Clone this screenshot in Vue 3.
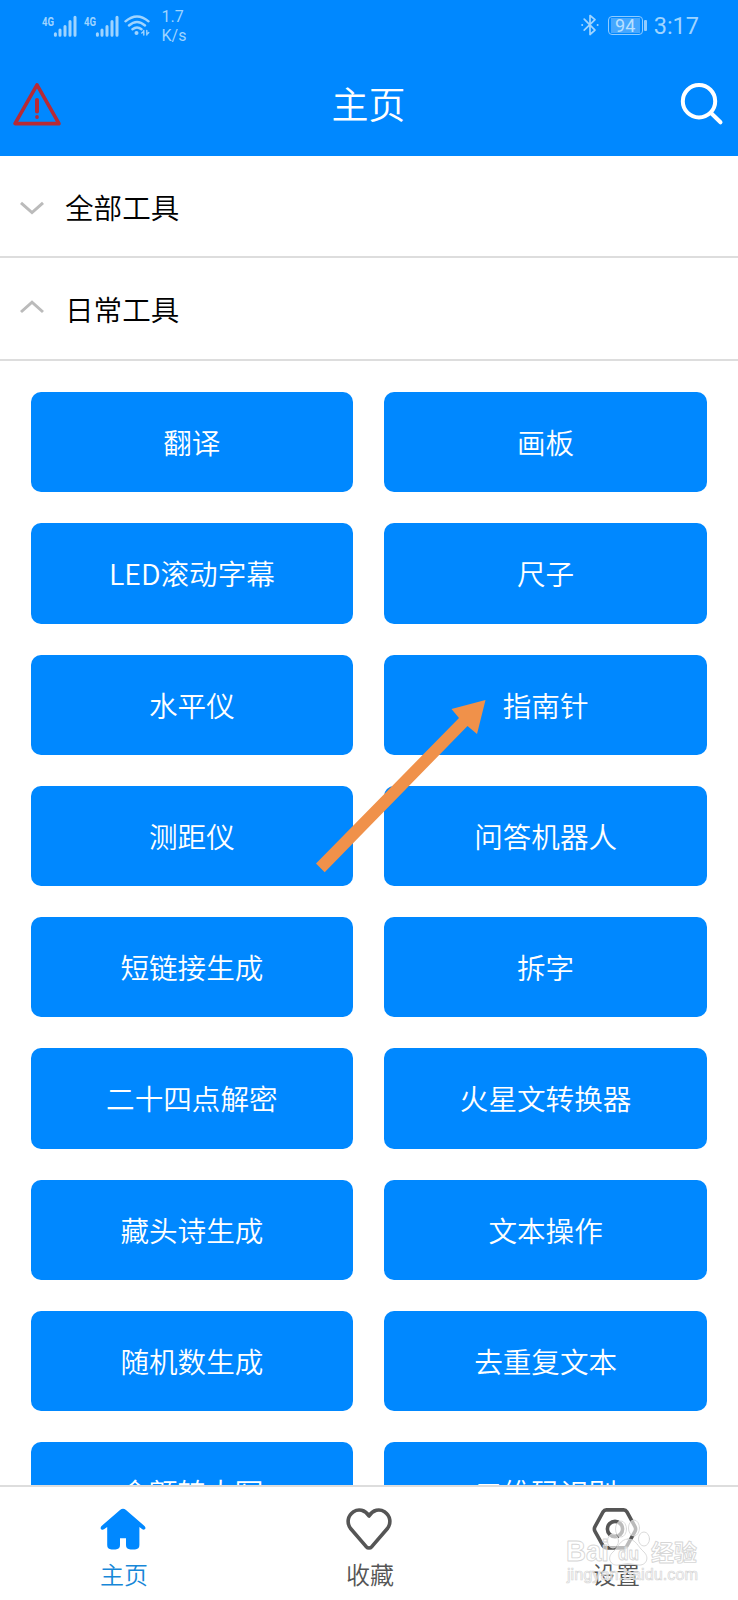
<template>
  <div class="page">
    <header class="header">
      <div class="status-bar">
        <div class="status-left">
          <svg v-for="n in 2" :key="n" class="signal" viewBox="0 0 36 24">
            <text x="0" y="11" class="signal-text" textLength="12" lengthAdjust="spacingAndGlyphs">4G</text>
            <path d="M13.4 20.2V18.8M18 20.2V15M23 20.2V11.5M28 20.2V6.5M33 20.2V2.2" />
          </svg>
          <svg class="wifi" viewBox="0 0 26 24">
            <path d="M1.5 8.3Q13 -1.5 24.5 8.3M5 12.5Q13 5.5 21 12.5M8.5 16.3Q13 12.6 17.5 16.3" />
            <circle cx="12.5" cy="20" r="2" />
            <path class="wifi-data" d="M19.8 17.5V22M22.8 17.5V22M17.8 20L19.8 18.2M24.8 19.6L22.8 21.4" />
          </svg>
          <div class="speed">
            <span>1.7</span>
            <span>K/s</span>
          </div>
        </div>
        <div class="status-right">
          <svg class="bluetooth" viewBox="0 0 18 24">
            <path d="M3.2 6.2L14 17.2L9 21.5V2.5L14 6.6L3.2 17.2" />
            <circle cx="1.2" cy="12" r="1" />
            <circle cx="16.6" cy="12" r="1" />
          </svg>
          <div class="battery"><span>94</span></div>
          <span class="clock">3:17</span>
        </div>
      </div>
      <div class="title-bar">
        <svg class="warning" viewBox="0 0 50 44">
          <path d="M25 2.8L47 41.6H3Z" />
          <path class="mark" d="M25 18V29.5" />
          <circle cx="25" cy="35" r="1.9" />
        </svg>
        <h1>主页</h1>
        <svg class="search" viewBox="0 0 44 44">
          <circle cx="19" cy="19.2" r="16.2" />
          <path d="M31 31L40.5 40.3" />
        </svg>
      </div>
    </header>

    <div class="group closed">
      <svg class="chevron" viewBox="0 0 24 14"><path d="M1 1.8L12 11.6L23 1.8" /></svg>
      <span>全部工具</span>
    </div>
    <div class="group opened">
      <svg class="chevron" viewBox="0 0 24 14"><path d="M1 12L12 2.2L23 12" /></svg>
      <span>日常工具</span>
    </div>

    <main class="content">
      <div class="tools">
        <button v-for="tool in tools" :key="tool" class="tool">{{ tool }}</button>
      </div>
    </main>

    <nav class="tab-bar">
      <a class="tab active">
        <svg viewBox="0 0 46 42">
          <path class="home" d="M20 2Q23 -0.6 26 2L44.7 18.2Q46.2 20 44.8 21.2Q43.6 22.2 42 21L39.4 19V37Q39.4 41.4 35 41.4H30.5Q26 41.4 26 37V30.3H20V37Q20 41.4 15.5 41.4H11.5Q7.2 41.4 7.2 37V19L4 21.3Q2.4 22.2 1.2 21.2Q0 20 1.3 18.2Z" />
        </svg>
        <span>主页</span>
      </a>
      <a class="tab">
        <svg viewBox="0 0 46 42">
          <path d="M23 8C19 1.7 12.4 0.6 7.5 3.8C1.3 8 0.6 15.3 4.8 20.8L20 38.4Q23 41.6 26 38.4L41.2 20.8C45.4 15.3 44.7 8 38.5 3.8C33.6 0.6 27 1.7 23 8Z" />
        </svg>
        <span>收藏</span>
      </a>
      <a class="tab">
        <svg viewBox="0 0 46 42">
          <path d="M14.3 1.9H31.7Q33.7 1.9 34.8 3.7L43 18.6Q44.3 21 43 23.4L34.8 38.1Q33.7 39.9 31.7 39.9H14.3Q12.3 39.9 11.2 38.1L3 23.4Q1.7 21 3 18.6L11.2 3.7Q12.3 1.9 14.3 1.9Z" />
          <circle cx="23" cy="21" r="7.6" />
        </svg>
        <span>设置</span>
      </a>
    </nav>

    <svg class="arrow" viewBox="0 0 170 174">
      <path d="M169.5 0L161 34L151.5 26L8.7 172.3L0 163.5L143 18L135.5 9Z" />
    </svg>

    <svg class="watermark" viewBox="0 0 136 66">
      <g class="paw">
        <ellipse cx="46" cy="24" rx="5.5" ry="7" />
        <ellipse cx="54" cy="12" rx="5.5" ry="8" />
        <ellipse cx="67" cy="11" rx="5.5" ry="8" />
        <ellipse cx="77" cy="22" rx="5.5" ry="7" />
        <path d="M61 22C53 22 51 31 46 35C39 41 44 49 51 48Q61 45 71 48C79 49 83 41 77 35C71 30 69 22 61 22Z" />
      </g>
      <text x="-1" y="44" class="brand" textLength="43" lengthAdjust="spacingAndGlyphs">Bai</text>
      <text x="51" y="43" class="brand-du" textLength="21" lengthAdjust="spacingAndGlyphs">du</text>
      <text x="84" y="44" class="brand-cn" textLength="46" lengthAdjust="spacingAndGlyphs">经验</text>
      <text x="0" y="63" class="brand-url" textLength="131" lengthAdjust="spacingAndGlyphs">jingyan.baidu.com</text>
    </svg>
  </div>
</template>

<script setup>
const tools = [
  '翻译', '画板',
  'LED滚动字幕', '尺子',
  '水平仪', '指南针',
  '测距仪', '问答机器人',
  '短链接生成', '拆字',
  '二十四点解密', '火星文转换器',
  '藏头诗生成', '文本操作',
  '随机数生成', '去重复文本',
  '金额转大写', '二维码识别'
]
</script>

<style>
body {
  margin: 0;
}
</style>

<style scoped>
.page {
  position: relative;
  display: flex;
  flex-direction: column;
  width: 738px;
  height: 1600px;
  overflow: hidden;
  background: #fff;
  font-family: Roboto, 'Noto Sans CJK SC', sans-serif;
  font-weight: 350;
}

svg {
  display: block;
  flex: none;
  fill: none;
  stroke-linecap: round;
  stroke-linejoin: round;
}

/* 顶部 */
.header {
  flex: none;
  height: 156px;
  background: #08f;
}

.status-bar {
  display: flex;
  justify-content: space-between;
  height: 52px;
  box-sizing: border-box;
  padding: 8px 39px 0 42px;
  color: #9fd4ff;
  font-weight: 400;
}

.status-left,
.status-right {
  display: flex;
}

.signal {
  width: 36px;
  height: 24px;
  margin: 7px 5.5px 0 0;
  stroke: #9fd4ff;
  stroke-width: 3;
}

.signal-text {
  fill: #9fd4ff;
  stroke: none;
  font: 700 13px Roboto, sans-serif;
}

.wifi {
  width: 26px;
  height: 24px;
  margin: 5px 0 0 -1px;
  stroke: #9fd4ff;
  stroke-width: 2.4;
}

.wifi circle {
  fill: #9fd4ff;
  stroke: none;
}

.wifi .wifi-data {
  stroke-width: 1.4;
}

.speed {
  display: flex;
  flex-direction: column;
  margin-left: 11.5px;
  font-size: 16px;
  line-height: 18.5px;
}

.bluetooth {
  width: 18px;
  height: 24px;
  margin: 5px 9px 0 0;
  stroke: #9fd4ff;
  stroke-width: 1.7;
}

.bluetooth circle {
  fill: #9fd4ff;
  stroke: none;
}

.battery {
  position: relative;
  width: 35px;
  height: 19px;
  box-sizing: border-box;
  margin: 8px 11px 0 0;
  padding: 1px;
  border: 1px solid #8fcbff;
  border-radius: 4px;
}

.battery span {
  display: block;
  height: 15px;
  margin: 0 1px;
  background: #45a7ff;
  color: #b9e0ff;
  font-size: 18px;
  line-height: 16px;
  text-align: center;
}

.battery::after {
  content: '';
  position: absolute;
  top: 3px;
  right: -5px;
  width: 3px;
  height: 11px;
  border-radius: 1px;
  background: #8fcbff;
}

.clock {
  font-size: 23.5px;
  line-height: 36px;
}

.title-bar {
  display: flex;
  align-items: center;
  justify-content: space-between;
  height: 104px;
  padding: 0 14px 0 12px;
}

.warning {
  width: 50px;
  height: 44px;
  stroke: #b72a35;
  stroke-width: 3.6;
}

.warning .mark {
  stroke-width: 4;
}

.warning circle {
  fill: #b72a35;
  stroke: none;
}

.search {
  width: 44px;
  height: 44px;
  stroke: #fff;
  stroke-width: 4;
}

.title-bar h1 {
  margin: 6px 5px 0 0;
  color: #fff;
  font-size: 37px;
  font-weight: 350;
  line-height: 52px;
}

/* 分组 */
.group {
  display: flex;
  flex: none;
  align-items: center;
  height: 102px;
  box-sizing: border-box;
  padding: 3px 20px 0;
  border-bottom: 2px solid #ddd;
  color: #000;
  font-size: 28.6px;
}

.group span {
  margin-bottom: 3px;
}

.group.opened {
  height: 103px;
}

.chevron {
  width: 24px;
  height: 14px;
  margin-right: 21px;
  stroke: #bbb;
  stroke-width: 3;
  stroke-linecap: butt;
  stroke-linejoin: miter;
}

.opened .chevron {
  margin-bottom: 6px;
}

/* 工具列表 */
.content {
  flex: 1;
  min-height: 0;
  overflow: hidden;
}

.tools {
  display: grid;
  grid-template-columns: 1fr 1fr;
  grid-auto-rows: 100.25px;
  gap: 31px;
  padding: 31px 31px 0 30.5px;
}

.tool {
  padding: 0 0 1px;
  border: none;
  border-radius: 10px;
  background: #08f;
  color: #fff;
  font-family: 'Noto Sans CJK SC', sans-serif;
  font-size: 28.6px;
  font-weight: 350;
}

/* 底部导航 */
.tab-bar {
  display: flex;
  flex: none;
  height: 115px;
  box-sizing: border-box;
  border-top: 2px solid #ddd;
  background: #fff;
}

.tab {
  display: flex;
  flex: 1;
  flex-direction: column;
  align-items: center;
  padding-top: 21px;
  color: #555;
  font-size: 24px;
  line-height: 36px;
}

.tab svg {
  width: 46px;
  height: 42px;
  margin-bottom: 8px;
  stroke: #555;
  stroke-width: 3.6;
}

.tab span {
  margin-left: 2px;
}

.tab.active {
  color: #1787d8;
}

.tab .home {
  fill: #08f;
  stroke: none;
}

.arrow {
  position: absolute;
  top: 700px;
  left: 316px;
  width: 170px;
  height: 174px;
  fill: #f0914a;
}

.watermark {
  position: absolute;
  top: 1516px;
  left: 567px;
  width: 136px;
  height: 68px;
  overflow: visible;
  fill: rgba(255, 255, 255, 0.6);
  stroke: #d6d6d6;
  stroke-width: 0.9;
}

.brand {
  font: 700 29px 'Liberation Sans', sans-serif;
}

.brand-du {
  font: 700 19px 'Liberation Sans', sans-serif;
}

.brand-cn {
  font: 700 23px 'Noto Sans CJK SC', sans-serif;
}

.brand-url {
  font: 400 16px 'Liberation Sans', sans-serif;
  stroke-width: 0.7;
}
</style>
